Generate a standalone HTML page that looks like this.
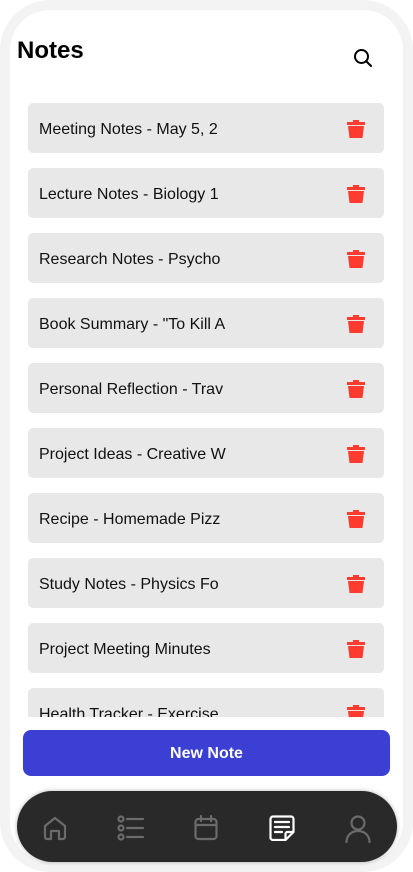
<!DOCTYPE html>
<html><head><meta charset="utf-8"><style>
*{margin:0;padding:0;box-sizing:border-box}
body{width:413px;height:872px;background:#fff;font-family:"Liberation Sans",sans-serif;position:relative;overflow:hidden}
.frame{position:absolute;left:0;top:0;width:413px;height:872px;border:10px solid #f3f3f3;border-radius:50px;background:#fff}
h1{position:absolute;left:17px;top:37px;font-size:24px;font-weight:bold;color:#000}
.search{position:absolute;left:353px;top:48px}
.list{position:absolute;left:28px;top:103px;width:356px;height:614px;overflow:hidden}
.card{height:50px;background:#e8e8e8;border-radius:5px;margin-bottom:15px;position:relative;font-size:16px;color:#111;line-height:54px;padding-left:11px}
.card svg{position:absolute;left:318px;top:17px}
.btn{position:absolute;left:23px;top:730px;width:367px;height:46px;background:#3b3fd4;border-radius:8px;color:#fff;font-weight:bold;font-size:16px;text-align:center;line-height:48px}
.nav{position:absolute;left:17px;top:791px;width:380px;height:71px;background:#292929;border-radius:36px;box-shadow:0 0 4px rgba(0,0,0,.3)}
.nav svg{position:absolute;top:24px}
</style></head><body>
<div class="frame"></div>
<h1>Notes</h1>
<svg class="search" width="20" height="20" viewBox="0 0 20 20"><circle cx="8.5" cy="8.5" r="6.5" fill="none" stroke="#000" stroke-width="2"/><path d="M13 13l5 5" stroke="#000" stroke-width="2" stroke-linecap="round"/></svg>
<div class="list">
<div class="card">Meeting Notes - May 5, 2<svg width="20" height="18" viewBox="0 0 20 18"><path d="M7 0h6v2h6v3H1V2h6z M2 6h16l-1.5 12h-13z" fill="#ff3b30"/></svg></div>
<div class="card">Lecture Notes - Biology 1<svg width="20" height="18" viewBox="0 0 20 18"><path d="M7 0h6v2h6v3H1V2h6z M2 6h16l-1.5 12h-13z" fill="#ff3b30"/></svg></div>
<div class="card">Research Notes - Psycho<svg width="20" height="18" viewBox="0 0 20 18"><path d="M7 0h6v2h6v3H1V2h6z M2 6h16l-1.5 12h-13z" fill="#ff3b30"/></svg></div>
<div class="card">Book Summary - "To Kill A<svg width="20" height="18" viewBox="0 0 20 18"><path d="M7 0h6v2h6v3H1V2h6z M2 6h16l-1.5 12h-13z" fill="#ff3b30"/></svg></div>
<div class="card">Personal Reflection - Trav<svg width="20" height="18" viewBox="0 0 20 18"><path d="M7 0h6v2h6v3H1V2h6z M2 6h16l-1.5 12h-13z" fill="#ff3b30"/></svg></div>
<div class="card">Project Ideas - Creative W<svg width="20" height="18" viewBox="0 0 20 18"><path d="M7 0h6v2h6v3H1V2h6z M2 6h16l-1.5 12h-13z" fill="#ff3b30"/></svg></div>
<div class="card">Recipe - Homemade Pizz<svg width="20" height="18" viewBox="0 0 20 18"><path d="M7 0h6v2h6v3H1V2h6z M2 6h16l-1.5 12h-13z" fill="#ff3b30"/></svg></div>
<div class="card">Study Notes - Physics Fo<svg width="20" height="18" viewBox="0 0 20 18"><path d="M7 0h6v2h6v3H1V2h6z M2 6h16l-1.5 12h-13z" fill="#ff3b30"/></svg></div>
<div class="card">Project Meeting Minutes<svg width="20" height="18" viewBox="0 0 20 18"><path d="M7 0h6v2h6v3H1V2h6z M2 6h16l-1.5 12h-13z" fill="#ff3b30"/></svg></div>
<div class="card">Health Tracker - Exercise<svg width="20" height="18" viewBox="0 0 20 18"><path d="M7 0h6v2h6v3H1V2h6z M2 6h16l-1.5 12h-13z" fill="#ff3b30"/></svg></div>
</div>
<div class="btn">New Note</div>
<div class="nav">
<svg style="left:25px" width="26" height="26" viewBox="0 0 26 26" fill="none" stroke="#6b6b6b" stroke-width="2.2" stroke-linejoin="round"><path d="M3 11L13 3l10 8v11a2 2 0 0 1-2 2h-4v-8h-8v8H5a2 2 0 0 1-2-2z"/></svg>
<svg style="left:100px" width="28" height="26" viewBox="0 0 28 26" fill="none" stroke="#6b6b6b" stroke-width="2.2"><circle cx="4" cy="4" r="2.5"/><circle cx="4" cy="13" r="2.5"/><circle cx="4" cy="22" r="2.5"/><path d="M10 4h16M10 13h16M10 22h16" stroke-linecap="round"/></svg>
<svg style="left:177px" width="24" height="26" viewBox="0 0 24 26" fill="none" stroke="#6b6b6b" stroke-width="2.2"><rect x="1.5" y="4" width="21" height="20" rx="3"/><path d="M1.5 10h21M7 1v5M17 1v5" stroke-linecap="round"/></svg>
<svg style="left:252px" width="26" height="26" viewBox="0 0 26 26" fill="none" stroke="#fff" stroke-width="2.2" stroke-linejoin="round"><path d="M4 1.5h18a2.5 2.5 0 0 1 2.5 2.5v13l-8 8H4A2.5 2.5 0 0 1 1.5 22V4A2.5 2.5 0 0 1 4 1.5z"/><path d="M6 7h14M6 12h14M6 17h7" stroke-linecap="round"/><path d="M24.5 17h-6a2 2 0 0 0-2 2v6" /></svg>
<svg style="left:328px" width="26" height="28" viewBox="0 0 26 28" fill="none" stroke="#6b6b6b" stroke-width="2.2"><circle cx="13" cy="8" r="6.5"/><path d="M1.5 27c0-6.5 5-11 11.5-11s11.5 4.5 11.5 11" stroke-linecap="round"/></svg>
</div>
</body></html>
